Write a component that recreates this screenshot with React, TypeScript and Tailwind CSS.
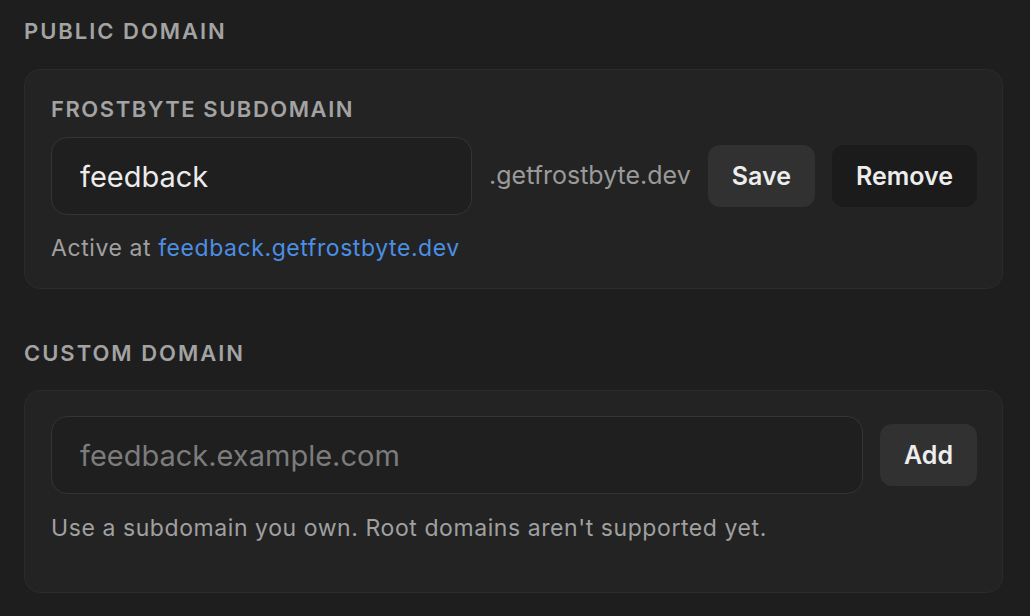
import { useState } from "react"

const SectionTitle: React.FC<{ children: React.ReactNode }> = ({ children }) => (
    <h2 className="text-[22px] leading-none font-semibold tracking-[0.09em] uppercase text-[#a3a3a3]">{children}</h2>
)

const App: React.FC = () => {
    const [subdomain, setSubdomain] = useState("feedback")
    const [custom, setCustom] = useState("")

    return (
        <div className="min-h-screen bg-[#1e1e1e] pl-6 pr-[27px] pt-5 font-['Inter',_'Noto_Sans',_sans-serif] text-[#ececec]">
            <SectionTitle>Public domain</SectionTitle>
            <div className="mt-[27px] rounded-2xl border border-[#2b2b2b] bg-[#232323] pl-[26px] pr-[25px] pt-[28px] pb-[28px]">
                <h3 className="text-[22px] leading-none font-semibold tracking-[0.07em] uppercase text-[#a3a3a3]">Frostbyte subdomain</h3>
                <div className="mt-[17px] flex items-center gap-[17px]">
                    <input
                        value={subdomain}
                        onChange={(e) => setSubdomain(e.target.value)}
                        className="h-[78px] flex-1 min-w-0 rounded-2xl border border-[#343434] bg-[#1f1f1f] pl-7 text-[29px] text-[#ececec] outline-none"
                    />
                    <span className="text-[25px] text-[#9a9a9a]">.getfrostbyte.dev</span>
                    <button className="h-[62px] rounded-xl bg-[#313131] px-6 pt-[2px] text-[25px] font-semibold text-[#ededed]">Save</button>
                    <button className="h-[62px] rounded-xl bg-[#1b1b1b] px-6 pt-[2px] text-[25px] font-semibold text-[#ededed]">Remove</button>
                </div>
                <p className="mt-[22px] text-[23px] leading-none tracking-[0.025em] text-[#a0a0a0]">
                    Active at <a href="#" className="text-[#4b8fe4]">feedback.getfrostbyte.dev</a>
                </p>
            </div>

            <div className="mt-[53px]">
                <SectionTitle>Custom domain</SectionTitle>
            </div>
            <div className="mt-[26px] rounded-2xl border border-[#2b2b2b] bg-[#232323] pl-[26px] pr-[25px] pt-[25px] pb-[52px]">
                <div className="flex items-center gap-[17px]">
                    <input
                        value={custom}
                        onChange={(e) => setCustom(e.target.value)}
                        placeholder="feedback.example.com"
                        className="h-[78px] flex-1 min-w-0 rounded-2xl border border-[#343434] bg-[#1f1f1f] pl-7 text-[29px] text-[#ececec] placeholder:text-[#7c7c7c] outline-none"
                    />
                    <button className="h-[62px] rounded-xl bg-[#313131] px-6 pt-[2px] text-[25px] font-semibold text-[#ededed]">Add</button>
                </div>
                <p className="mt-[23px] text-[23px] leading-none tracking-[0.025em] text-[#a0a0a0]">
                    Use a subdomain you own. Root domains aren't supported yet.
                </p>
            </div>
        </div>
    )
}

export default App
